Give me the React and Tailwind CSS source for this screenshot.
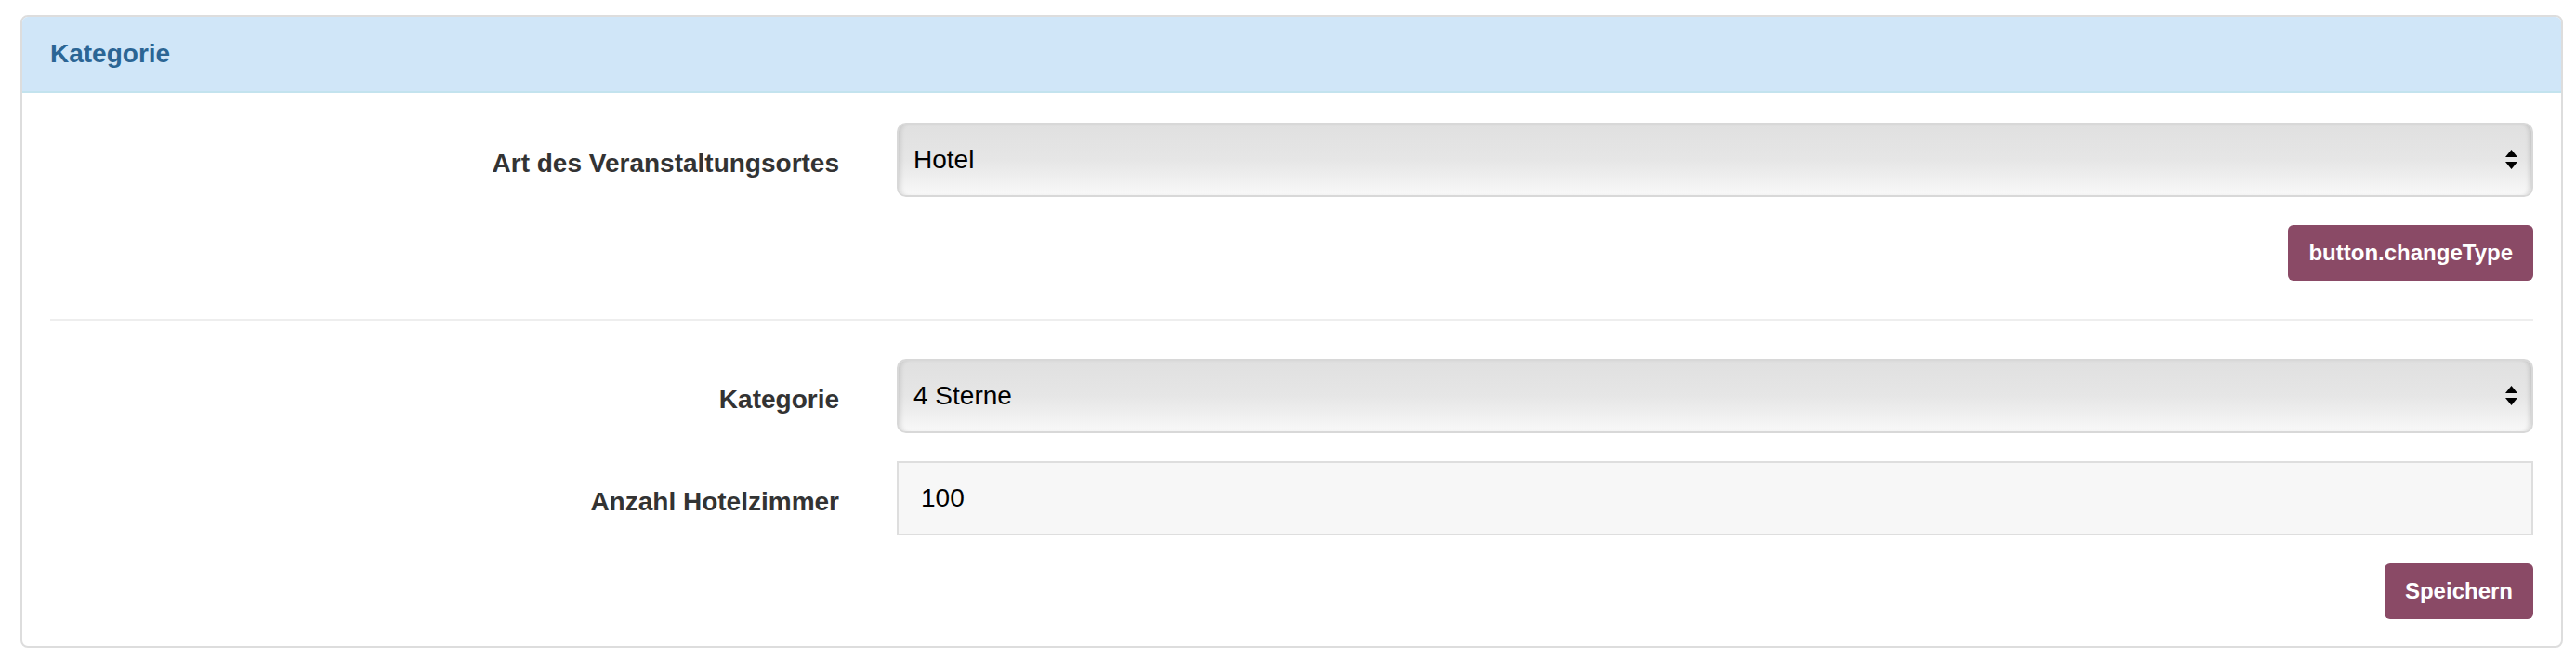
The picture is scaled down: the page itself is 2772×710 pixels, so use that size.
import React from "react";

const font = { fontFamily: '"Liberation Sans", Arial, sans-serif' };

export default function App() {
  return (
    <div className="min-h-[710px] bg-white pt-[16px] pl-[22px] pr-[14px]" style={font}>
      <div className="border-2 border-[#dddddd] rounded-[8px] bg-white">
        <div className="h-[82px] flex items-center pl-[30px] bg-[#d0e6f8] border-b-2 border-[#c3e3ee] rounded-t-[6px]">
          <h3 className="text-[28px] font-bold text-[#2b6594] leading-none">Kategorie</h3>
        </div>

        <div className="px-[30px] pt-[32px] pb-[29px]">
          <FormRow label="Art des Veranstaltungsortes">
            <SelectBox value="Hotel" />
          </FormRow>
          <div className="flex justify-end mt-[30px]">
            <Button>button.changeType</Button>
          </div>

          <hr className="mt-[41px] border-0 border-t-2 border-[#eeeeee]" />

          <div className="mt-[41px]">
            <FormRow label="Kategorie">
              <SelectBox value="4 Sterne" />
            </FormRow>
          </div>
          <div className="mt-[30px]">
            <FormRow label="Anzahl Hotelzimmer">
              <div className="h-[80px] flex items-center pl-[24px] bg-[#f7f7f7] border-2 border-[#dedede] text-[28px] text-black">
                100
              </div>
            </FormRow>
          </div>
          <div className="flex justify-end mt-[30px]">
            <Button>Speichern</Button>
          </div>
        </div>
      </div>
    </div>
  );
}

function FormRow({ label, children }) {
  return (
    <div className="grid grid-cols-[849px_1fr] gap-x-[62px]">
      <label className="text-right text-[28px] leading-[40px] font-bold text-[#333333] pt-[24px]">{label}</label>
      <div>{children}</div>
    </div>
  );
}

function SelectBox({ value }) {
  return (
    <div className="h-[80px] flex items-center justify-between pl-[16px] pr-[15px] border-2 border-[#d8d8d8] rounded-[10px] bg-linear-to-b from-[#e0e0e0] via-[#e6e6e6] to-[#f8f8f8] shadow-[inset_5px_0_5px_-3px_rgba(0,0,0,0.12),inset_-5px_0_5px_-3px_rgba(0,0,0,0.14)] text-[28px] text-black">
      <span>{value}</span>
      <svg width="13" height="22" viewBox="0 0 13 22">
        <polygon points="6.5,0 13,8 0,8" fill="#000" />
        <polygon points="0,13 13,13 6.5,21" fill="#000" />
      </svg>
    </div>
  );
}

function Button({ children }) {
  return (
    <button className="h-[60px] px-[22px] rounded-[6px] bg-[#8a4a66] text-white text-[24px] font-bold leading-none">
      {children}
    </button>
  );
}
